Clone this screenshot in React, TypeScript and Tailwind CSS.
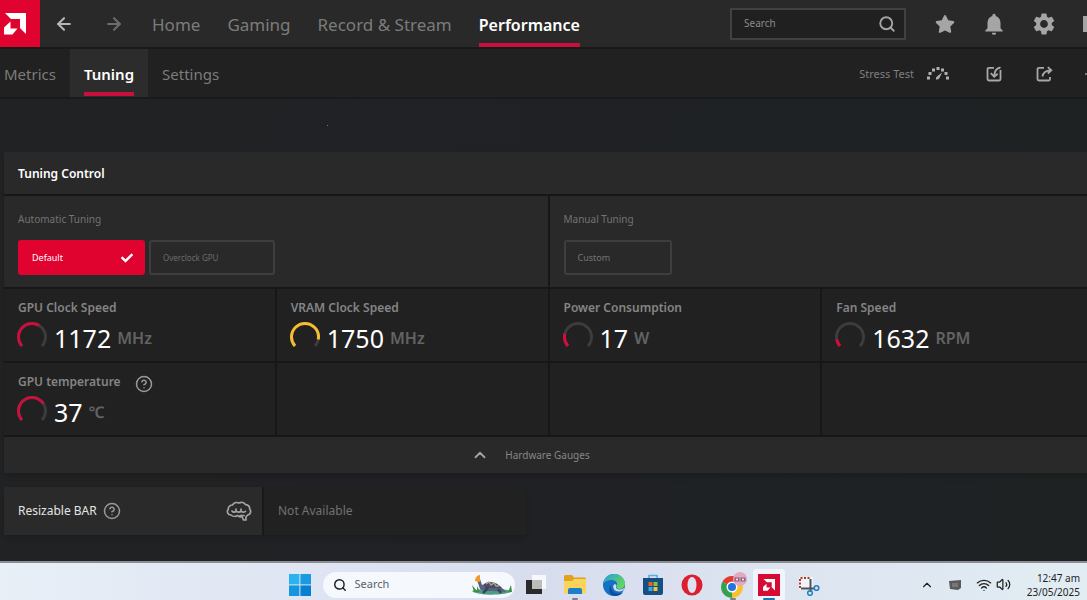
import { Search, HelpCircle, ArrowLeft, ArrowRight, ChevronUp, Wifi, Volume2 } from "lucide-react";
import { FaStar, FaCheck } from "react-icons/fa";
import { MdNotifications, MdSettings } from "react-icons/md";

const mainTabs = ["Home", "Gaming", "Record & Stream", "Performance"];
const subTabs = ["Metrics", "Tuning", "Settings"];

const gauges = [
  { label: "GPU Clock Speed", value: "1172", unit: "MHz", fill: 62, color: "#c8103e" },
  { label: "VRAM Clock Speed", value: "1750", unit: "MHz", fill: 88, color: "#f5bd30" },
  { label: "Power Consumption", value: "17", unit: "W", fill: 21, color: "#d80a3c" },
  { label: "Fan Speed", value: "1632", unit: "RPM", fill: 12, color: "#d80a3c" },
  { label: "GPU temperature", value: "37", unit: "℃", fill: 72, color: "#c8103e", help: true },
];

function AmdMark({ className }: { className: string }) {
  return (
    <svg viewBox="0 0 22 22" className={className} fill="#fff" aria-hidden="true">
      <path d="M1 0h21v21l-6-6V6H7z" />
      <path d="M6.500 8.500v7h7L8.500 21.500H0v-7z" />
    </svg>
  );
}

function Dial({ fill, color }: { fill: number; color: string }) {
  const arc = "M6 26A13.5 13.5 0 1 1 26 26";
  return (
    <svg viewBox="0 0 32 32" className="size-8 shrink-0" fill="none" strokeWidth="3" aria-hidden="true">
      <path d={arc} stroke="#3c3c3c" />
      <path d={arc} stroke={color} pathLength={100} strokeDasharray={`${fill} 200`} />
    </svg>
  );
}

function StressIcon() {
  return (
    <svg viewBox="0 0 24 16" className="h-4 w-6" fill="#b0b0b0" aria-hidden="true">
      <rect x="1" y="10.500" width="3" height="3" />
      <rect x="2.500" y="6" width="3" height="3" />
      <rect x="6" y="2.500" width="3" height="3" />
      <rect x="10.500" y="1" width="3" height="3" />
      <rect x="15" y="2.500" width="3" height="3" />
      <rect x="18.500" y="6" width="3" height="3" />
      <rect x="20" y="10.500" width="3" height="3" />
      <path d="M10 13.500q-.5-2 1-3L16 6.500l-2.500 5.500q-1.500 2-3.500 1.500z" />
    </svg>
  );
}

function ImportIcon() {
  return (
    <svg viewBox="0 0 16 16" className="size-4" fill="none" stroke="#a8a8a8" strokeWidth="1.800" aria-hidden="true">
      <path d="M8 1.800H3a1.500 1.500 0 0 0-1.500 1.500V13A1.500 1.500 0 0 0 3 14.500h10a1.500 1.500 0 0 0 1.500-1.500V4" />
      <path d="M14.500 1.500C10.500 2 8.500 4.500 8.200 10M4.800 7.200L8.200 10.700l3.500-3" />
    </svg>
  );
}

function ExportIcon() {
  return (
    <svg viewBox="0 0 17 16" className="h-4 w-[17px]" fill="none" stroke="#a8a8a8" strokeWidth="1.800" aria-hidden="true">
      <path d="M8 1.800H3a1.500 1.500 0 0 0-1.500 1.500V13A1.500 1.500 0 0 0 3 14.500h9.500A1.500 1.500 0 0 0 14 13v-2" />
      <path d="M6.500 10.500C7 6.500 9 4.500 14.500 4.300M11.800 1.200l3.500 3.100-3.500 3.200" />
    </svg>
  );
}

function BrainIcon() {
  return (
    <svg viewBox="0 0 26 22" className="h-[22px] w-[26px]" fill="none" stroke="#a4a4a4" strokeWidth="1.700" strokeLinejoin="round" strokeLinecap="round" aria-hidden="true">
      <path d="M5 15C1.500 15 .5 11.500 2.200 9.500 2 6.500 4.500 5 6.500 5 8 2.500 11 2 13 3c2.500-1.300 5.500-.5 6.500 1.700 3 .3 4.300 2.300 4.200 4.300 1.800 2.500.8 5.500-2 6L20 17v3h-2.500l-1.500-3.500c-2 .7-3.500.2-4.500-1-2 1.200-5 1-6.500-.5z" />
      <path d="M6 11c1 1.500 3 1.500 4 0V9m0 2c1.200 1.500 4 1.500 5 0V9m0 2c1 1.500 3 1.500 4.500.300M14 15.500h4" />
    </svg>
  );
}

function Turtle() {
  return (
    <svg viewBox="0 0 42 22" className="h-[22px] w-[42px]" aria-hidden="true">
      <path d="M1 17c8-3 30-3 40 0-4 5-35 5-40 0z" fill="#4f9c86" />
      <path d="M3 18L1 11l5 6 0-5 3 6zM37 18l3-7 1 7z" fill="#3f8f4a" />
      <path d="M6 6l3 9c3 2 8 2 12 2l14 1c-3-4-7-6-11-8-6-2-9-1-13 1L9 5z" fill="#58627f" />
      <path d="M13 10c5-4 13-2 18 4l-17 0z" fill="#454e63" />
      <path d="M15 10l3-2 2 3 3-2 2 3 3 0" stroke="#b4a58a" strokeWidth="1.300" fill="none" />
      <path d="M17 14l-5 5M27 15l3 4" stroke="#39435d" strokeWidth="2.500" />
      <path d="M4 7c0-3 2-6 5-6l0 7z" fill="#f19a2b" />
    </svg>
  );
}

function WindowsIcon() {
  return (
    <svg viewBox="0 0 22 22" className="size-[22px]" aria-hidden="true">
      <path d="M0 0h10.400v10.400H0z" fill="#2bb3ee" />
      <path d="M11.400 0H22v10.400H11.400z" fill="#189be2" />
      <path d="M0 11.400h10.400V22H0z" fill="#1495df" />
      <path d="M11.400 11.400H22V22H11.400z" fill="#087fd1" />
    </svg>
  );
}

function TaskViewIcon() {
  return (
    <svg viewBox="0 0 22 22" className="size-[22px]" aria-hidden="true">
      <path d="M7 1h14v14H7z" fill="#f7f8fa" />
      <path d="M1 6h16v14H1z" fill="#2a2a2a" />
      <path d="M7 6h10v9H7z" fill="#bcbcbc" />
    </svg>
  );
}

function FolderIcon() {
  return (
    <svg viewBox="0 0 22 22" className="size-[22px]" aria-hidden="true">
      <path d="M0 2.500Q0 1 1.500 1H8l2 2.500h10.500Q22 3.500 22 5v8H0z" fill="#e0a21f" />
      <path d="M0 7h8l2-2h12v14.500H0z" fill="#fbd35b" />
      <path d="M4 20v-4q0-2 2-2h10q2 0 2 2v4z" fill="#1c7fc8" />
    </svg>
  );
}

function EdgeIcon() {
  return (
    <svg viewBox="0 0 22 22" className="size-[22px]" aria-hidden="true">
      <defs>
        <linearGradient id="edge-top" x1="0" y1="0" x2="1" y2="0.600">
          <stop offset="0" stopColor="#229fdf" />
          <stop offset="1" stopColor="#65d65c" />
        </linearGradient>
      </defs>
      <circle cx="11" cy="11" r="11" fill="#1470c4" />
      <path d="M0 10C1 4 5.500 0 11 0c6.500 0 11 4.500 11 9.500 0 3.500-2.500 5.500-5.500 5.500-3 0-3.500-1.500-2.500-3C15 8 12 6 8.500 6 5 6 1.500 7.500 0 10z" fill="url(#edge-top)" />
      <path d="M8 11c-1 5 3 8.500 7.500 8.500 2 0 3.500-.5 5-1.500-2 2.500-5 4-8.500 4C7 22 4.500 16 8 11z" fill="#0d4f9e" />
      <path d="M13.500 12c-1 1.500-.5 3.500 3 3.500 2 0 3.500-.5 5-2-.500 2.500-2.500 4-5.500 4C11 17.500 9 13 11 10.500c2-.5 2.500.5 2.500 1.500z" fill="#d9dff0" />
    </svg>
  );
}

function StoreIcon() {
  return (
    <svg viewBox="0 0 22 22" className="size-[22px]" aria-hidden="true">
      <path d="M7 4V1.500h8V4" stroke="#52b2e8" strokeWidth="1.600" fill="none" />
      <path d="M1 4h20v15q0 2-2 2H3q-2 0-2-2z" fill="#174f83" />
      <path d="M6.500 8H10.500v4H6.500z" fill="#ef5a2e" />
      <path d="M11.500 8H15.500v4h-4z" fill="#86c440" />
      <path d="M6.500 13h4v4h-4z" fill="#32a9ea" />
      <path d="M11.500 13h4v4h-4z" fill="#fbc02d" />
    </svg>
  );
}

function OperaIcon() {
  return (
    <svg viewBox="0 0 22 22" className="size-[22px]" aria-hidden="true">
      <circle cx="11" cy="11" r="10.500" fill="#dc1e2d" />
      <ellipse cx="11" cy="11" rx="4.500" ry="8" fill="#dce2f1" />
    </svg>
  );
}

function ChromeIcon() {
  return (
    <svg viewBox="0 0 28 28" className="size-7" aria-hidden="true">
      <path d="M12 16L2.500 10.500A11 11 0 0 1 21.500 10.500z" fill="#e33b2e" />
      <path d="M12 16V27A11 11 0 0 1 2.500 10.500z" fill="#35a04f" />
      <path d="M12 16l9.500-5.500A11 11 0 0 1 12 27z" fill="#f9c22d" />
      <circle cx="12" cy="16" r="5.500" fill="#fff" />
      <circle cx="12" cy="16" r="4" fill="#2374df" />
      <circle cx="20" cy="8" r="7" fill="#e4a7c0" />
      <path d="M14.500 6.500h5v4h-5zM20.500 6.500h5v4h-5z" fill="#8c657b" />
      <circle cx="17" cy="8.500" r="1" fill="#fff" />
      <circle cx="23" cy="8.500" r="1" fill="#fff" />
    </svg>
  );
}

function SnipIcon() {
  return (
    <svg viewBox="0 0 22 22" className="size-[22px]" aria-hidden="true">
      <path d="M1 3h14v13H1z" fill="#f2f3f7" />
      <path d="M2 14V4h11" stroke="#b5392b" strokeWidth="2" strokeDasharray="2 1.500" fill="none" />
      <path d="M3 14.500h14M12.500 5v13" stroke="#4d5258" strokeWidth="2" />
      <circle cx="18.500" cy="14" r="2.300" stroke="#2482c4" strokeWidth="1.600" fill="none" />
      <circle cx="12" cy="19" r="2.300" stroke="#2482c4" strokeWidth="1.600" fill="none" />
    </svg>
  );
}

function Header() {
  return (
    <header className="flex h-[49px] items-stretch overflow-hidden border-b-2 border-[#191919] bg-[#292929]">
      <div className="flex w-10 shrink-0 items-center bg-[#e0022f] pl-1">
        <AmdMark className="size-[22px]" />
      </div>
      <button aria-label="Back" className="flex w-12 shrink-0 items-center justify-center text-[#b5b5b5]">
        <ArrowLeft size={20} strokeWidth={2.5} />
      </button>
      <button aria-label="Forward" className="ml-0.5 flex w-12 shrink-0 items-center justify-center text-[#6d6d6d]">
        <ArrowRight size={20} strokeWidth={2.5} />
      </button>
      <nav className="ml-3.5 flex gap-[27px]">
        {mainTabs.map((tab) => (
          <a
            key={tab}
            href="#"
            className={
              tab === "Performance"
                ? "flex items-center border-b-4 border-[#c8103e] pt-1.5 text-base font-semibold whitespace-nowrap text-white"
                : "flex items-center border-b-4 border-transparent pt-1.5 text-[17px] whitespace-nowrap text-[#7c7c7c]"
            }
          >
            {tab}
          </a>
        ))}
      </nav>
      <div className="-mr-4 ml-auto flex shrink-0 items-center text-[#a5a5a5]">
        <label className="flex h-8 w-44 items-center border-2 border-[#414141] bg-[#202020] px-3">
          <input
            aria-label="Search"
            placeholder="Search"
            className="min-w-0 flex-1 bg-transparent text-[10px] outline-none placeholder:text-[#8b8b8b]"
          />
          <Search size={18} strokeWidth={2.5} className="-mr-1" />
        </label>
        <button aria-label="Favorites" className="ml-[29px]">
          <FaStar size={20} />
        </button>
        <button aria-label="Notifications" className="ml-[26px]">
          <MdNotifications size={26} />
        </button>
        <button aria-label="Preferences" className="ml-6">
          <MdSettings size={26} />
        </button>
        <button aria-label="Toggle sidebar" className="ml-[26px] h-4 w-5 bg-[#a5a5a5]" />
      </div>
    </header>
  );
}

function SubHeader() {
  return (
    <div className="flex h-[50px] items-stretch overflow-hidden border-b-2 border-[#191a1c] bg-[#212121]">
      <nav className="-ml-2.5 flex">
        {subTabs.map((tab) => (
          <a
            key={tab}
            href="#"
            className={
              tab === "Tuning"
                ? "flex bg-[#2c2c2c] px-3.5 text-[15px] font-semibold text-white"
                : "flex px-3.5 text-[15px] text-[#7c7c7c]"
            }
          >
            <span
              className={
                tab === "Tuning"
                  ? "mb-px flex items-center border-b-4 border-[#c8103e] pt-2"
                  : "mb-px flex items-center border-b-4 border-transparent pt-2"
              }
            >
              {tab}
            </span>
          </a>
        ))}
      </nav>
      <div className="-mr-2 ml-auto flex shrink-0 items-center pt-0.5 text-[#7f7f7f]">
        <button className="flex items-center gap-3 text-[11px]">
          Stress Test
          <StressIcon />
        </button>
        <button aria-label="Import profile" className="ml-9">
          <ImportIcon />
        </button>
        <button aria-label="Export profile" className="ml-[34px]">
          <ExportIcon />
        </button>
        <button aria-label="Reset" className="ml-8 h-0.5 w-2.5 bg-[#777]" />
      </div>
    </div>
  );
}

function Gauge({ gauge }: { gauge: (typeof gauges)[number] }) {
  return (
    <div className="h-[72px] bg-[#212121] px-3.5 pt-2.5">
      <div className="flex h-[17px] items-center gap-3.5 text-[12px] font-semibold text-[#858585]">
        {gauge.label}
        {gauge.help && (
          <button aria-label="About GPU temperature" className="mt-1 text-[#999]">
            <HelpCircle size={18} />
          </button>
        )}
      </div>
      <div className="-ml-0.5 flex items-center">
        <Dial fill={gauge.fill} color={gauge.color} />
        <span className="ml-1.5 pt-1 text-[25px] leading-[36px] text-white">{gauge.value}</span>
        <span className="ml-1.5 pt-1 text-base font-semibold text-[#636363]">{gauge.unit}</span>
      </div>
    </div>
  );
}

function TuningControl() {
  return (
    <section className="-mr-1.5 ml-1 flex flex-col gap-0.5 bg-[#171717] shadow-md">
      <h1 className="flex h-[42px] items-center bg-[#292929] px-3.5 pt-0.5 text-[12px] font-semibold text-white">
        Tuning Control
      </h1>
      <div className="grid grid-cols-2 gap-0.5">
        <div className="h-[91px] bg-[#292929] px-3.5 pt-3.5">
          <h2 className="text-[10px] leading-[18px] text-[#737373]">Automatic Tuning</h2>
          <div className="mt-3 flex gap-1">
            <button className="flex h-[35px] w-[127px] items-center justify-between rounded-[3px] bg-[#e0022f] pr-3 pl-3.5 text-[9px] text-white">
              Default
              <FaCheck size={12} />
            </button>
            <button className="flex h-[35px] w-[126px] items-center rounded-[3px] border-2 border-[#3e3e3e] px-3 text-[8px] text-[#6c6c6c]">
              Overclock GPU
            </button>
          </div>
        </div>
        <div className="h-[91px] bg-[#292929] px-3.5 pt-3.5">
          <h2 className="text-[10px] leading-[18px] text-[#737373]">Manual Tuning</h2>
          <button className="mt-3 flex h-[35px] w-[108px] items-center rounded-[3px] border-2 border-[#3e3e3e] px-3 text-[9px] text-[#737373]">
            Custom
          </button>
        </div>
      </div>
      <div className="grid grid-cols-4 gap-0.5">
        {gauges.map((g) => (
          <Gauge key={g.label} gauge={g} />
        ))}
        <div className="bg-[#212121]" />
        <div className="bg-[#212121]" />
        <div className="bg-[#212121]" />
      </div>
      <button className="flex h-9 items-center justify-center gap-4 bg-[#292929] pr-9 text-[10px] text-[#858585]">
        <ChevronUp size={18} strokeWidth={2.5} className="text-[#a0a0a0]" />
        Hardware Gauges
      </button>
    </section>
  );
}

function ResizableBar() {
  return (
    <section className="mt-3.5 ml-1 flex h-12 w-[522px] gap-0.5 bg-[#191919] text-[12px] shadow-md">
      <div className="flex flex-1 items-center bg-[#2a2a2a] pr-2.5 pl-3.5 text-[#e4e4e4]">
        Resizable BAR
        <button aria-label="About Resizable BAR" className="ml-1.5 text-[#999]">
          <HelpCircle size={18} />
        </button>
        <span className="ml-auto">
          <BrainIcon />
        </span>
      </div>
      <div className="flex flex-1 items-center bg-[#212121] px-3.5 text-[#717171]">Not Available</div>
    </section>
  );
}

function Taskbar() {
  return (
    <footer className="flex h-[39px] items-center overflow-hidden border-t-2 border-[#8b8d95] bg-linear-to-r from-[#e8eff7] via-[#d8ddee] to-[#e2edf3] pt-1.5 pl-7 text-[#1f1f1f]">
      <div className="flex-1" />
      <div className="flex items-center">
        <button aria-label="Start">
          <WindowsIcon />
        </button>
        <label className="ml-3 flex h-[26px] w-48 items-center rounded-full bg-[#f5f9fd] pr-0.5 pl-2.5">
          <Search size={14} strokeWidth={2.5} />
          <input
            aria-label="Search Windows"
            placeholder="Search"
            className="ml-2 min-w-0 flex-1 bg-transparent text-[11px] outline-none placeholder:text-[#5b5f66]"
          />
          <Turtle />
        </label>
      </div>
      <div className="ml-2.5 flex items-center gap-[17px]">
        <button aria-label="Task view"><TaskViewIcon /></button>
        <button aria-label="File Explorer" className="relative">
          <FolderIcon />
          <span className="absolute -bottom-1 left-2 h-0.5 w-1.5 rounded-full bg-[#7c808a]" />
        </button>
        <button aria-label="Edge"><EdgeIcon /></button>
        <button aria-label="Microsoft Store"><StoreIcon /></button>
        <button aria-label="Opera"><OperaIcon /></button>
        <button aria-label="Chrome" className="relative -mr-2">
          <ChromeIcon />
          <span className="absolute -bottom-px left-2.5 h-0.5 w-1.5 rounded-full bg-[#7c808a]" />
        </button>
        <button aria-label="AMD Software" className="relative -mx-1 flex h-8 w-8 items-center justify-center rounded-[3px] bg-[#f1f4fb]">
          <span className="flex size-[22px] items-center justify-center bg-[#d80b35]">
            <AmdMark className="size-3" />
          </span>
          <span className="absolute bottom-px left-2.5 h-0.5 w-3 rounded-full bg-[#1976bd]" />
        </button>
        <button aria-label="Snipping Tool"><SnipIcon /></button>
      </div>
      <div className="flex flex-1 items-center justify-end pr-[7px]">
        <button aria-label="Show hidden icons">
          <ChevronUp size={14} />
        </button>
        <svg viewBox="0 0 14 12" className="ml-3.5 h-3 w-3.5" aria-hidden="true">
          <path d="M1 2l12-1v8l-3 2-8-1z" fill="#5a5a5a" />
          <path d="M4 4h6v4H4z" fill="#777" />
        </svg>
        <Wifi size={16} className="ml-3.5" />
        <Volume2 size={15} className="ml-1" />
        <div className="ml-4 text-right text-[10px] leading-[14px]">
          <div>12:47 am</div>
          <div>23/05/2025</div>
        </div>
      </div>
    </footer>
  );
}

export default function App() {
  return (
    <div className="flex min-h-screen flex-col overflow-hidden bg-[#202126] font-['Noto_Sans','Open_Sans',sans-serif]">
      <Header />
      <SubHeader />
      <main className="flex-1 overflow-hidden bg-linear-to-r from-[#202223] via-[#1f2125] to-[#1e2223]">
        <div className="flex h-[53px] items-center pl-[327px]">
          <span className="size-px bg-[#777]" />
        </div>
        <TuningControl />
        <ResizableBar />
      </main>
      <Taskbar />
    </div>
  );
}
